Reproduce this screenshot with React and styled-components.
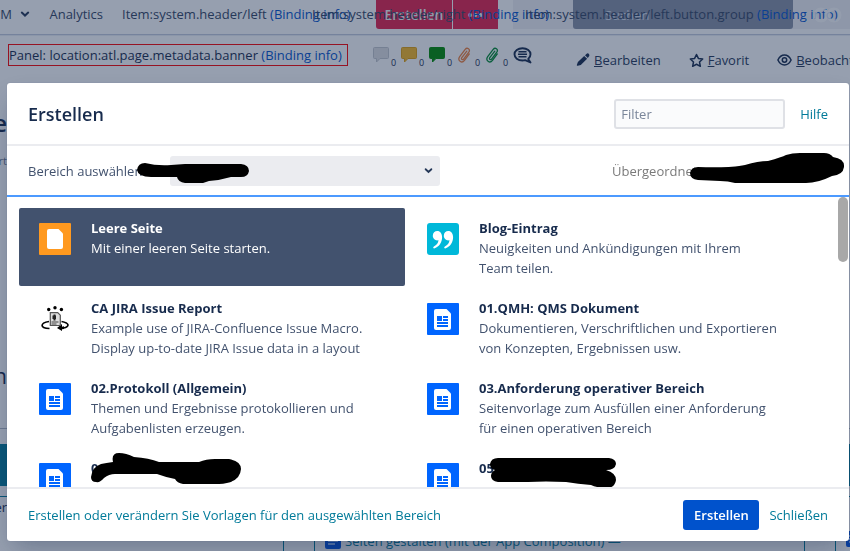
import styled, { createGlobalStyle } from "styled-components"

const GlobalStyle = createGlobalStyle`
    body {
        margin: 0;
        background: #fff;
        color: #172b4d;
        font-family: "Open Sans", "Noto Sans", sans-serif;
        font-size: 13px;
        line-height: 20px;
    }

    * {
        box-sizing: border-box;
    }

    a {
        text-decoration: none;
    }

    button, input, select {
        font: inherit;
    }
`

/* Page behind the dialog */

const Page = styled.div`
    height: 100vh;
    overflow: hidden;
    display: flex;
    flex-direction: column;
`

const Header = styled.header`
    display: grid;
    flex: none;
    height: 35px;
    border-bottom: 1px solid #c3cbdc;
    box-shadow: inset 0 -1px #fff, 0 1px #eceff5;
    white-space: nowrap;
    overflow: hidden;
`

const HeaderLayer = styled.div`
    grid-area: 1 / 1;
    display: flex;
    align-items: center;
    height: 28px;
    padding-left: ${({ $start }) => $start}px;
    gap: ${({ $gap }) => $gap || 0}px;
`

const NavLink = styled.a`
    display: flex;
    align-items: center;
    justify-content: flex-end;
    gap: 8px;
    color: #344563;
    width: ${({ $width }) => ($width ? `${$width}px` : "auto")};

    svg {
        flex: none;
    }
`

const Item = styled.span`
    color: #344563;
`

const InfoLink = styled.a`
    color: #0052cc;
`

const HeaderControls = styled(HeaderLayer)`
    height: 29px;
`

const CreateButton = styled.button`
    height: 29px;
    width: ${({ $width }) => $width}px;
    margin-right: 1px;
    padding: 0;
    border: 0;
    border-radius: ${({ $radius }) => $radius};
    background: #e5224b;
    color: #f4f5f7;
    font-weight: 600;
    font-size: 14px;
`

const HeaderTools = styled.div`
    display: flex;
    align-items: center;
    flex: 1;
    height: 29px;
    margin-left: 14px;
    padding-left: 60px;
    background: #f1f1f4;
    color: #fff;
    gap: 20px;
`

const Search = styled.input`
    width: 220px;
    height: 29px;
    padding: 2px 32px;
    border: 0;
    border-radius: 0 0 3px 3px;
    background: #8790a5;

    &::placeholder {
        color: #d0d8e6;
        opacity: 1;
    }
`

const Toolbar = styled.div`
    display: flex;
    align-items: flex-start;
    flex: none;
    height: 78px;
    padding: 9px 0 0 8px;
    white-space: nowrap;
    overflow: hidden;
`

const Banner = styled.div`
    height: 22px;
    border: 1px solid #ff0000;
    flex: none;
    width: 340px;
`

const Counters = styled.div`
    display: flex;
    flex: none;
    width: 184px;
    height: 24px;
    margin-left: 25px;
    gap: 12px;
`

const Counter = styled.span`
    display: flex;
    width: 16px;
    height: 24px;
    padding-top: 3px;
    font-size: 9px;

    svg {
        flex: none;
    }

    span {
        padding: 6px 0 0 2px;
    }
`

const Actions = styled.nav`
    display: flex;
    margin: 6px 0 0 19px;
    gap: 28px;
`

const Action = styled.a`
    display: flex;
    align-items: center;
    gap: 4px;
    color: #253858;
`

const Fragment = styled.div`
    display: flex;
    flex: none;
    justify-content: flex-end;
    width: 7px;
    height: ${({ $height }) => $height}px;
    font-size: ${({ $size }) => $size}px;
    font-weight: ${({ $weight }) => $weight || 400};
    color: ${({ $color }) => $color || "#172b4d"};
    overflow: hidden;
`

const Rule = styled.hr`
    flex: none;
    width: 100%;
    height: 1px;
    margin: 0 0 15px;
    border: 0;
    background: #b3bac5;
`

const Band = styled.div`
    flex: none;
    height: 42px;
    margin-bottom: 10px;
    background: #007a99;
`

const Panels = styled.div`
    display: grid;
    grid-template-columns: 284px 1fr 16px;
    column-gap: 30px;
    flex: 1;
    min-height: 0;
    margin-right: -1px;
`

const Panel = styled.div`
    border: 1px solid #007a99;
    border-left-width: ${({ $open }) => ($open ? 0 : 1)}px;
    padding: ${({ $open }) => ($open ? 0 : "34px 10px")};
    overflow: hidden;
    white-space: nowrap;
`

const PanelLink = styled.a`
    display: flex;
    align-items: center;
    gap: 4px;
    color: #007a99;

    svg {
        flex: none;
    }
`

/* Dialog */

const Blanket = styled.div`
    position: fixed;
    inset: 0;
    display: flex;
    padding: 83px 1px 10px 7px;
    background: rgba(23, 43, 77, 0.45);
`

const Dialog = styled.section`
    display: flex;
    flex-direction: column;
    flex: 1;
    min-width: 0;
    border-radius: 3px;
    background: #fff;
    box-shadow: 0 0 1px rgba(9, 30, 66, 0.3), 0 12px 24px -6px rgba(9, 30, 66, 0.3);
`

const DialogHeader = styled.div`
    display: flex;
    align-items: center;
    flex: none;
    height: 63px;
    padding: 0 21px;
    border-bottom: 2px solid #ebecf0;
`

const Title = styled.h2`
    flex: 1;
    margin: 0;
    font-size: 18px;
    font-weight: 600;
`

const Filter = styled.input`
    width: 171px;
    height: 30px;
    margin-right: 15px;
    padding: 0 5px;
    border: 2px solid #dfe1e6;
    border-radius: 3px;
    background: #fafbfc;

    &::placeholder {
        color: #7a869a;
        opacity: 1;
    }
`

const TextLink = styled.a`
    color: #007a99;
`

const SpaceBar = styled.div`
    position: relative;
    display: flex;
    align-items: center;
    flex: none;
    height: 51px;
    padding: 0 21px;
    border-bottom: 2px solid #4c9aff;
    color: #42526e;
`

const SpaceLabel = styled.label`
    width: 142px;
`

const SelectWrap = styled.div`
    display: grid;
    align-items: center;
    width: 270px;
    margin-right: auto;

    svg {
        grid-area: 1 / 1;
        justify-self: end;
        margin-right: 7px;
        pointer-events: none;
    }
`

const Select = styled.select`
    grid-area: 1 / 1;
    width: 100%;
    height: 30px;
    padding: 0 10px;
    border: 0;
    border-radius: 3px;
    appearance: none;
    background: #ebecf0;
    color: #172b4d;
`

const Parent = styled.span`
    width: 216px;
    color: #7a7a7a;
    white-space: nowrap;
`

const Scroller = styled.div`
    display: flex;
    flex: 1;
    min-height: 0;
    overflow: hidden;
`

const Templates = styled.ul`
    display: grid;
    grid-template-columns: repeat(2, minmax(0, 1fr));
    grid-auto-rows: 78px;
    gap: 2px;
    flex: 1;
    margin: 0;
    padding: 11px 44px 0 12px;
    list-style: none;
`

const Track = styled.div`
    flex: none;
    width: 12px;
    padding: 0 1px;
`

const Thumb = styled.div`
    height: 65px;
    border-radius: 5px;
    background: #a8a8a8;
`

const Template = styled.li`
    position: relative;
    display: flex;
    gap: 20px;
    padding: 10px 0 8px 20px;
    border-radius: 2px;
    background: ${({ $selected }) => ($selected ? "#42526e" : "transparent")};
    color: ${({ $selected }) => ($selected ? "#fff" : "#42526e")};

    > svg:first-child {
        flex: none;
        margin-top: 5px;
    }
`

const TemplateName = styled.strong`
    display: block;
    font-weight: 700;
    color: ${({ $selected }) => ($selected ? "#fff" : "#172b4d")};
`

const Description = styled.span`
    display: block;
    white-space: pre;
`

const Redaction = styled.svg`
    position: absolute;
    left: ${({ $x }) => $x}px;
    top: ${({ $y }) => $y}px;
`

const Footer = styled.div`
    display: flex;
    align-items: center;
    flex: none;
    height: 54px;
    padding: 0 21px;
    border-top: 2px solid #ebecf0;
    gap: 10px;
`

const FooterLink = styled(TextLink)`
    margin-right: auto;
`

const Submit = styled.button`
    width: 76px;
    height: 30px;
    padding: 0;
    border: 0;
    border-radius: 3px;
    background: #0052cc;
    color: #fff;
    font-weight: 600;
`

const Chevron = ({ size = 10 }) => (
    <svg width={size} height={size} viewBox="0 0 10 10">
        <path d="M1.8 3.6 5 6.6 8.2 3.6" fill="none" stroke="#253858" strokeWidth="2" strokeLinecap="round" />
    </svg>
)

const Bubble = ({ color, edge }) => (
    <svg width="16" height="16" viewBox="0 0 16 16">
        <path
            d="M1.500.5h13q1 0 1 1v9q0 1-1 1H7l-3.500 3.500v-3.500h-2q-1 0-1-1v-9q0-1 1-1z"
            fill={color}
            stroke={edge || color}
        />
    </svg>
)

const Clip = ({ color }) => (
    <svg width="16" height="16" viewBox="0 0 16 16" fill="none" stroke={color} strokeWidth="1.3" strokeLinecap="round">
        <path d="M9.8 4.2 4.8 10.7c-1 1.4.8 2.7 1.8 1.4l5.2-7c1.900-2.700-1.600-5.300-3.600-2.700L2.700 9.700c-2.600 3.700 2 7.200 4.800 3.700l4.800-6.500" />
    </svg>
)

const Discussion = () => (
    <svg width="20" height="18" viewBox="0 0 20 18">
        <path d="M9.500 1.200c4.700 0 8 2.700 8 6.100 0 1.900-.8 3.500-2.300 4.600l2.300 3.600-5.400-2.300c-.8.2-1.700.3-2.600.3-4.700 0-8-2.700-8-6.200s3.300-6.100 8-6.100z" fill="none" stroke="#172b4d" strokeWidth="1.900" strokeLinejoin="round" />
        <path d="M5.500 4.800h8M5 7.300h9M5.500 9.800h8" stroke="#172b4d" strokeWidth="1.400" />
    </svg>
)

const Pencil = () => (
    <svg width="14" height="14" viewBox="0 0 14 14" fill="#172b4d">
        <path d="M9 2.200 11 .6q1-.6 1.900.3t.3 2L11.800 5zM8.200 3l2.900 2.800-6.300 6.100-3 .9q-1.400.3-.9-1l1-2.800z" />
    </svg>
)

const Star = () => (
    <svg width="15" height="15" viewBox="0 0 16 16">
        <path d="m8 1.600 2 4.200 4.600.6-3.400 3.200.9 4.600L8 12l-4.100 2.200.9-4.600L1.400 6.400 6 5.800z" fill="none" stroke="#172b4d" strokeWidth="1.600" strokeLinejoin="round" />
    </svg>
)

const Eye = () => (
    <svg width="15" height="12" viewBox="0 0 15 12" fill="none" stroke="#172b4d" strokeWidth="1.500">
        <path d="M.9 6Q3.300 1 7.500 1t6.600 5q-2.400 5-6.600 5T.9 6z" />
        <circle cx="7.500" cy="6" r="2.200" />
    </svg>
)

const AppMark = () => (
    <svg width="30" height="20" viewBox="0 0 30 20" fill="none" stroke="#fff" strokeWidth="3" opacity=".8">
        <circle cx="8" cy="10" r="6" />
        <circle cx="21" cy="10" r="6" />
    </svg>
)

const BlankIcon = () => (
    <svg width="32" height="32" viewBox="0 0 32 32">
        <rect width="32" height="32" rx="1" fill="#ff991f" />
        <path d="M10 6h9.500L24 10.500V24q0 2-2 2H10q-2 0-2-2V8q0-2 2-2z" fill="#fff" />
    </svg>
)

const BlogIcon = () => (
    <svg width="32" height="32" viewBox="0 0 32 32">
        <rect width="32" height="32" rx="3" fill="#00b8d9" />
        <g fill="#fff">
            <path d="M10.300 8c2.900 0 4.800 2.500 4.800 6.300 0 5-2.900 9.400-7.400 11q-1 .3-1.400-.4t.6-1.300c2.600-1.400 4.300-3.500 4.600-6.300-3 .8-5.700-1.500-5.700-4.500C5.800 10 7.800 8 10.300 8z" />
            <path d="M21.300 8c2.900 0 4.800 2.500 4.800 6.300 0 5-2.900 9.400-7.400 11q-1 .3-1.400-.4t.6-1.300c2.600-1.400 4.300-3.500 4.600-6.300-3 .8-5.700-1.500-5.700-4.500 0-2.800 2-4.800 4.500-4.800z" />
        </g>
    </svg>
)

const ReportIcon = () => (
    <svg width="32" height="32" viewBox="0 0 32 32">
        <g fill="#000">
            <circle cx="9.700" cy="6.500" r="1.700" />
            <circle cx="16" cy="4.800" r="1.700" />
            <circle cx="22.400" cy="6.500" r="1.700" />
            <path d="m18 25 5-4v2.800l2-.6v2.800l-2 .3V28z" />
        </g>
        <path d="M10 18.500C1 20 .5 25 10.500 25.500M22.500 18.500c8 1.500 8.500 5 2 6.500" fill="none" stroke="#000" strokeWidth="1.700" />
        <path d="M11.300 9.600h7.400l2.600 2.600v10.300h-10z" fill="#ddd" stroke="#555" strokeWidth="1.200" />
        <path d="M13.500 12.500h3.500v3.500h-3.500zM14.500 11.500h2v6h-2z" fill="#222" />
        <path d="M12.500 19h7M12.500 21h5" stroke="#444" strokeWidth="1" />
    </svg>
)

const DocIcon = () => (
    <svg width="32" height="32" viewBox="0 0 32 32">
        <rect width="32" height="32" rx="1" fill="#0065ff" />
        <path d="M9 6h10.500L24 10.500V25q0 2-2 2H9q-2 0-2-2V8q0-2 2-2z" fill="#fff" />
        <path d="M10 13h5v5h-5zM16 13h5v2h-5zM16 16h5v2h-5zM10 19h11v2H10zM10 22h11v2H10z" fill="#0065ff" />
    </svg>
)

const SmallDocIcon = () => (
    <svg width="16" height="16" viewBox="0 0 16 16">
        <rect width="16" height="16" rx="2" fill="#0052e0" />
        <path d="M3 5h10M3 8h10M3 11h7" stroke="#b3d4ff" strokeWidth="1.500" />
    </svg>
)

const counters = [
    <Bubble color="#e0e0e2" edge="#c4c6cc" />,
    <Bubble color="#f7b824" edge="#e0a010" />,
    <Bubble color="#008a00" />,
    <Clip color="#f0803c" />,
    <Clip color="#008a30" />,
]

const templates = [
    { name: "Leere Seite", text: "Mit einer leeren Seite starten.", icon: <BlankIcon />, selected: true },
    { name: "Blog-Eintrag", text: "Neuigkeiten und Ankündigungen mit Ihrem\nTeam teilen.", icon: <BlogIcon /> },
    {
        name: "CA JIRA Issue Report",
        text: "Example use of JIRA-Confluence Issue Macro.\nDisplay up-to-date JIRA Issue data in a layout",
        icon: <ReportIcon />,
    },
    {
        name: "01.QMH: QMS Dokument",
        text: "Dokumentieren, Verschriftlichen und Exportieren\nvon Konzepten, Ergebnissen usw.",
        icon: <DocIcon />,
    },
    {
        name: "02.Protokoll (Allgemein)",
        text: "Themen und Ergebnisse protokollieren und\nAufgabenlisten erzeugen.",
        icon: <DocIcon />,
    },
    {
        name: "03.Anforderung operativer Bereich",
        text: "Seitenvorlage zum Ausfüllen einer Anforderung\nfür einen operativen Bereich",
        icon: <DocIcon />,
    },
    {
        name: "04.",
        icon: <DocIcon />,
        mark: {
            x: 72,
            y: 5,
            d: "M0 24Q1 14 10 11Q15 10 22 9Q20 0 28 0Q35 0 43 4Q58 5 68 9H108Q115 6 124 6H138Q150 8 150 16Q149 30 128 31H92Q86 30 84 26Q74 24 66 21H24Q18 21 13 25Q9 30 5 29Q0 29 0 24Z",
        },
    },
    {
        name: "05.",
        icon: <DocIcon />,
        mark: {
            x: 83,
            y: 10,
            d: "M0 6Q1 0 8 0H119Q126 1 126 6Q125 12 116 12Q126 15 126 22Q125 30 116 30Q108 30 101 27Q88 26 76 24Q55 23 38 24H8Q1 23 1 18Q1 14 5 12Q0 11 0 6Z",
        },
    },
]

const Mark = ({ x, y, d }) => (
    <Redaction $x={x} $y={y} width="156" height="34" viewBox="0 0 156 34" aria-hidden="true">
        <path d={d} fill="#000" />
    </Redaction>
)

const Background = () => (
    <Page>
        <Header>
            <HeaderControls $start={376}>
                <CreateButton $width={76} $radius="0 0 0 3px">Erstellen</CreateButton>
                <CreateButton $width={45} $radius="0">•••</CreateButton>
                <HeaderTools>
                    <Search placeholder="Suchen" aria-label="Suchen" />
                    <AppMark />
                </HeaderTools>
            </HeaderControls>
            <HeaderLayer $start={0} $gap={19}>
                <NavLink href="#" $width={30}>PM <Chevron /></NavLink>
                <NavLink href="#" $width={54}>Analytics</NavLink>
                <Item>Item:system.header/left <InfoLink href="#">(Binding info)</InfoLink></Item>
            </HeaderLayer>
            <HeaderLayer $start={312}>
                <Item>Item:system.header/right <InfoLink href="#">(Binding info)</InfoLink></Item>
            </HeaderLayer>
            <HeaderLayer $start={525}>
                <Item>Item:system.header/left.button.group <InfoLink href="#">(Binding info)</InfoLink></Item>
            </HeaderLayer>
        </Header>
        <Toolbar>
            <Banner>
                Panel: location:atl.page.metadata.banner <InfoLink href="#">(Binding info)</InfoLink>
            </Banner>
            <Counters>
                {counters.map((icon, i) => (
                    <Counter key={i}>{icon}<span>0</span></Counter>
                ))}
                <Counter><Discussion /></Counter>
            </Counters>
            <Actions>
                <Action href="#"><Pencil /><span><u>B</u>earbeiten</span></Action>
                <Action href="#"><Star /><span><u>F</u>avorit</span></Action>
                <Action href="#"><Eye /><span><u>B</u>eobachten</span></Action>
            </Actions>
        </Toolbar>
        <Fragment $height={38} $size={24} $weight={600}>Startseite</Fragment>
        <Fragment $height={215} $size={11} $color="#6b778c">konfiguriert</Fragment>
        <Fragment $height={62} $size={21}>Version</Fragment>
        <Rule />
        <Band />
        <Panels>
            <Panel $open><Fragment $height={20} $size={13}>Bilder</Fragment></Panel>
            <Panel>
                <PanelLink href="#"><SmallDocIcon />Seiten gestalten (mit der App Composition) —</PanelLink>
            </Panel>
            <Panel><PanelLink href="#"><SmallDocIcon /></PanelLink></Panel>
        </Panels>
    </Page>
)

export default () => (
    <>
        <GlobalStyle />
        <Background />
        <Blanket>
            <Dialog role="dialog" aria-labelledby="dialog-title">
                <DialogHeader>
                    <Title id="dialog-title">Erstellen</Title>
                    <Filter placeholder="Filter" aria-label="Filter" />
                    <TextLink href="#">Hilfe</TextLink>
                </DialogHeader>
                <SpaceBar>
                    <SpaceLabel htmlFor="space">Bereich auswählen</SpaceLabel>
                    <SelectWrap>
                        <Select id="space"><option></option></Select>
                        <Chevron size={9} />
                    </SelectWrap>
                    <Parent>Übergeordnete</Parent>
                    <Mark x={130} y={16} d="M0 8Q1 1 8 1Q20 4 34 3L48 2H104Q112 3 112 9Q111 15 104 15H94Q84 18 72 19L66 21H48Q41 20 40 15H14Q1 15 0 8Z" />
                    <Mark x={683} y={7} d="M0 20Q1 14 8 14Q40 15 55 12Q68 8 78 8Q92 4 96 2Q102 0 110 0H134Q140 0 143 4Q155 6 154 14Q153 22 142 23Q128 30 116 30H45Q38 28 30 28L8 27Q0 26 0 20Z" />
                </SpaceBar>
                <Scroller>
                    <Templates>
                        {templates.map(({ name, text, icon, selected, mark }) => (
                            <Template key={name} $selected={selected}>
                                {icon}
                                <div>
                                    <TemplateName $selected={selected}>{name}</TemplateName>
                                    <Description>{text}</Description>
                                </div>
                                {mark && <Mark {...mark} />}
                            </Template>
                        ))}
                    </Templates>
                    <Track><Thumb /></Track>
                </Scroller>
                <Footer>
                    <FooterLink href="#">
                        Erstellen oder verändern Sie Vorlagen für den ausgewählten Bereich
                    </FooterLink>
                    <Submit type="button">Erstellen</Submit>
                    <TextLink href="#">Schließen</TextLink>
                </Footer>
            </Dialog>
        </Blanket>
    </>
)
